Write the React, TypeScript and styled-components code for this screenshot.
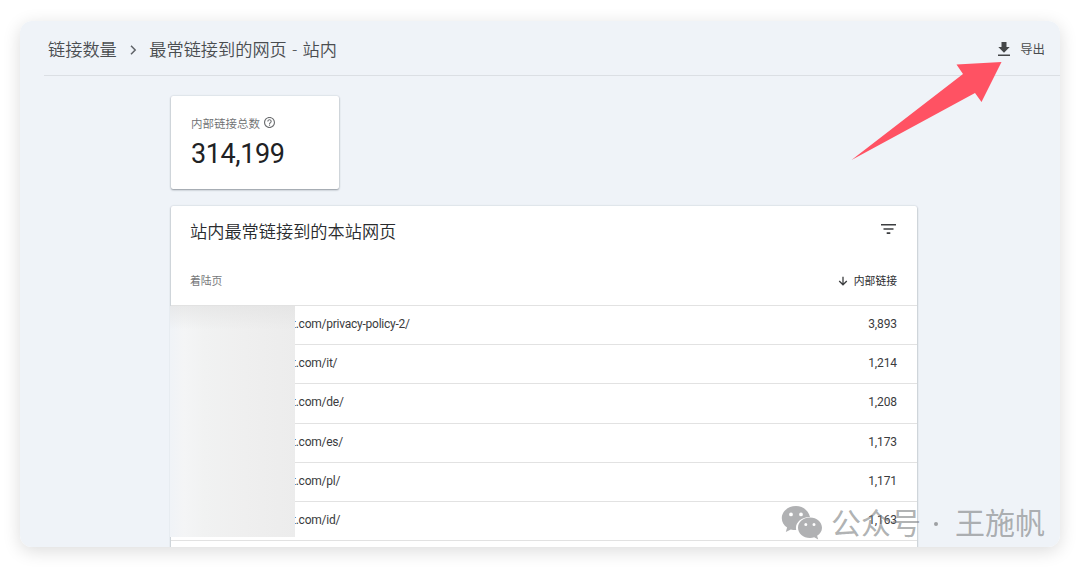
import React from 'react';
import styled, { createGlobalStyle } from 'styled-components';

const GlobalStyle = createGlobalStyle`
  * { box-sizing: border-box; }
  body {
    margin: 0;
    background: #fff;
    overflow: hidden;
    font-family: Roboto, "Noto Sans CJK SC", sans-serif;
  }
`;

const Page = styled.div`
  height: 567px;
  padding: 21px 20px 20px;
  position: relative;
`;

const Panel = styled.main`
  height: 525.5px;
  border-radius: 12px;
  background: #eff3f8;
  overflow: hidden;
`;

const Shadow = styled.div`
  border-radius: 12px;
  box-shadow: 0 4px 18px rgba(0, 0, 0, 0.14);
`;

const Header = styled.header`
  height: 55px;
  margin-left: 24px;
  padding: 4px 15px 0 4px;
  border-bottom: 1px solid #dbdfe4;
  display: flex;
  align-items: center;
  justify-content: space-between;
`;

const Breadcrumb = styled.nav`
  display: flex;
  align-items: center;
  font-size: 17.2px;
  font-weight: 350;
  line-height: 24px;
  color: #4a4d50;
  word-spacing: 1.2px;
  white-space: nowrap;
`;

const Chevron = styled.svg`
  width: 8px;
  height: 10px;
  margin: 0 12px 0 12.5px;
`;

const ExportButton = styled.div`
  display: flex;
  align-items: center;
  gap: 9px;
  font-size: 12.4px;
  line-height: 18px;
  color: #4a4c4e;
`;

const DownloadIcon = styled.svg`
  width: 14px;
  height: 15px;
  margin-bottom: 2px;
`;

const Content = styled.div`
  width: 746px;
  margin: 20px 0 0 151px;
  display: flex;
  flex-direction: column;
  gap: 17px;
`;

const Card = styled.section`
  background: #fff;
  border-radius: 2px;
  box-shadow: 0 1px 2px rgba(40, 50, 60, 0.45), 0 0 2px rgba(40, 50, 60, 0.16);
`;

const TotalCard = styled(Card)`
  width: 168px;
  height: 93px;
  padding: 18px 20px 0;
`;

const TotalLabel = styled.div`
  display: flex;
  align-items: center;
  gap: 4px;
  font-size: 11.5px;
  font-weight: 350;
  line-height: 20px;
  color: #6c6e70;
  white-space: nowrap;
`;

const HelpIcon = styled.svg`
  width: 11px;
  height: 11px;
  margin-bottom: 3px;
`;

const TotalValue = styled.div`
  font-size: 27px;
  line-height: 32px;
  margin-top: 4px;
  letter-spacing: -0.4px;
  color: #202124;
`;

const TableCard = styled(Card)`
  height: 360px;
  position: relative;
`;

const TableTitle = styled.div`
  height: 52px;
  padding: 0 20px 4px 19px;
  display: flex;
  align-items: center;
  justify-content: space-between;
  font-size: 17.2px;
  font-weight: 350;
  color: #292b2e;
`;

const FilterIcon = styled.svg`
  width: 17px;
  height: 12px;
  margin-bottom: 3px;
`;

const TableHead = styled.div`
  height: 48px;
  padding: 0 20px 3px 19px;
  border-bottom: 1px solid #e2e2e2;
  display: flex;
  align-items: center;
  justify-content: space-between;
  font-size: 10.8px;
  color: #77797b;
`;

const SortLabel = styled.div`
  display: flex;
  align-items: center;
  gap: 6px;
  color: #2b2d30;
`;

const SortIcon = styled.svg`
  width: 10px;
  height: 10px;
  margin-top: 2px;
`;

const Row = styled.div`
  height: 39.2px;
  padding: 0 20px 2px 121px;
  border-bottom: 1px solid #e2e2e2;
  display: flex;
  align-items: center;
  justify-content: space-between;
  font-size: 12px;
  letter-spacing: -0.24px;
  color: #3a3b3d;
`;

const Count = styled.span`
  letter-spacing: -0.1px;
`;

const Redaction = styled.div`
  position: absolute;
  left: -1px;
  top: 100px;
  width: 125px;
  height: 231px;
  background:
    linear-gradient(180deg, rgba(225, 225, 225, 0.6), rgba(235, 235, 235, 0) 24px),
    linear-gradient(90deg, #f0f3f7 0, #f4f5f6 14px, #f1f2f2 34px, #efefef 75px, #ececec 126px);
`;

const Pointer = styled.svg`
  position: absolute;
  left: 850px;
  top: 60px;
  width: 154px;
  height: 102px;
`;

const Watermark = styled.div`
  position: absolute;
  left: 781px;
  top: 504px;
  display: flex;
  align-items: center;
  gap: 8px;
  height: 40px;
  font-size: 30px;
  line-height: 40px;
  color: rgba(125, 127, 130, 0.62);
  white-space: pre;
`;

const WechatIcon = styled.svg`
  width: 42px;
  height: 35px;
  margin-bottom: 3px;
`;

const WatermarkText = styled.div`
  display: flex;
  align-items: center;
`;

const Dot = styled.span`
  width: 4px;
  height: 4px;
  border-radius: 50%;
  margin: 0 17px 0 13px;
  background: rgba(125, 127, 130, 0.72);
`;

const rows = [
  ['privacy-policy-2/', '3,893'],
  ['it/', '1,214'],
  ['de/', '1,208'],
  ['es/', '1,173'],
  ['pl/', '1,171'],
  ['id/', '1,163'],
];

export default function App() {
  return (
    <Page>
      <GlobalStyle />
      <Shadow>
        <Panel>
          <Header>
            <Breadcrumb>
              <span>链接数量</span>
              <Chevron viewBox="0 0 8 10">
                <path d="M2 .8 6.2 5 2 9.2" fill="none" stroke="#5f6368" strokeWidth="1.5" />
              </Chevron>
              <span>最常链接到的网页 - 站内</span>
            </Breadcrumb>
            <ExportButton>
              <DownloadIcon viewBox="0 0 14 15">
                <path d="M4.500 0h5v5h3.200L7 10.700 1.300 5h3.200zM1 12.500h12V14H1z" fill="#444648" />
              </DownloadIcon>
              <span>导出</span>
            </ExportButton>
          </Header>
          <Content>
            <TotalCard>
              <TotalLabel>
                <span>内部链接总数</span>
                <HelpIcon viewBox="2 2 20 20">
                  <path
                    d="M11 18h2v-2h-2v2zm1-16C6.480 2 2 6.480 2 12s4.480 10 10 10 10-4.480 10-10S17.520 2 12 2zm0 18c-4.410 0-8-3.590-8-8s3.590-8 8-8 8 3.590 8 8-3.590 8-8 8zm0-14c-2.210 0-4 1.790-4 4h2c0-1.100.9-2 2-2s2 .9 2 2c0 2-3 1.750-3 5h2c0-2.250 3-2.500 3-5 0-2.210-1.790-4-4-4z"
                    fill="#6c6e70"
                  />
                </HelpIcon>
              </TotalLabel>
              <TotalValue>314,199</TotalValue>
            </TotalCard>
            <TableCard>
              <TableTitle>
                <span>站内最常链接到的本站网页</span>
                <FilterIcon viewBox="0 0 17 12">
                  <path d="M1 1h15v1.600H1zM3.500 5.200h10v1.600h-10zM6.700 9.300h3.600v1.600H6.700z" fill="#3c3e40" />
                </FilterIcon>
              </TableTitle>
              <TableHead>
                <span>着陆页</span>
                <SortLabel>
                  <SortIcon viewBox="0 0 10 10">
                    <path d="M5 .8v8M1.200 5 5 8.800 8.800 5" fill="none" stroke="#3c3e40" strokeWidth="1.300" />
                  </SortIcon>
                  <span>内部链接</span>
                </SortLabel>
              </TableHead>
              {rows.map(([path, count]) => (
                <Row key={path}>
                  <span>t.com/{path}</span>
                  <Count>{count}</Count>
                </Row>
              ))}
              <Redaction />
            </TableCard>
          </Content>
        </Panel>
      </Shadow>
      <Pointer viewBox="850 60 154 102">
        <path d="M851.500 160 963 74 956.500 64.500 1001.500 62 981.500 102 975 93z" fill="#ff5263" />
      </Pointer>
      <Watermark>
        <WechatIcon viewBox="0 0 42 35">
          <path
            fillRule="evenodd"
            fill="#7f8184"
            fillOpacity=".62"
            d="M15 1C7 1 .8 6.400.8 13.200c0 3.900 2 7.100 5.300 9.400L4.800 27l5-2.600c1.800.5 3.500.8 5.400.7-1.700-7 5-13.500 13.800-13.200C27.500 5.500 21.800 1 15 1zM10 7.500a1.900 1.900 0 1 1 0 3.800 1.900 1.900 0 0 1 0-3.800zm10 0a1.900 1.900 0 1 1 0 3.800 1.900 1.900 0 0 1 0-3.800z"
          />
          <path
            fillRule="evenodd"
            fill="#7f8184"
            fillOpacity=".62"
            d="M29 12.500c-6.800 0-12 4.500-12 10.200S22.200 33 29 33c1.500 0 2.900-.3 4.200-.7l4 2.200-1.100-3.700c3-1.900 4.900-4.800 4.900-8.100 0-5.700-5.200-10.200-12-10.200zM24.800 18a1.500 1.500 0 1 1 0 3 1.500 1.500 0 0 1 0-3zm8.200 0a1.500 1.500 0 1 1 0 3 1.500 1.500 0 0 1 0-3z"
          />
        </WechatIcon>
        <WatermarkText>
          <span>公众号</span>
          <Dot />
          <span>王施帆</span>
        </WatermarkText>
      </Watermark>
    </Page>
  );
}
